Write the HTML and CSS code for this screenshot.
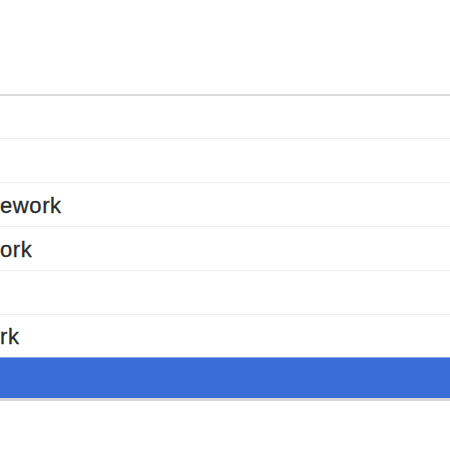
FILE: index.html
```html
<!DOCTYPE html>
<html>
<head>
<meta charset="utf-8">
<link rel="stylesheet" href="styles.css">
</head>
<body>
<div class="top"></div>
<div class="table">
  <div class="row first"></div>
  <div class="row"></div>
  <div class="row"><span class="cell">ework</span></div>
  <div class="row"><span class="cell">ork</span></div>
  <div class="row"></div>
  <div class="row last"><span class="cell">rk</span></div>
  <div class="row selected"></div>
</div>
</body>
</html>
```
FILE: styles.css
```css
html, body {
  margin: 0;
  padding: 0;
  background: #ffffff;
  width: 450px;
  height: 450px;
  overflow: hidden;
  font-family: "Liberation Sans", Arial, sans-serif;
}
.top {
  height: 94px;
}
.table {
  border-top: 2px solid #dadada;
}
.row {
  border-bottom: 1px solid #eeeeee;
  display: flex;
  align-items: center;
  box-sizing: border-box;
  height: 44px;
}
.row.first {
  height: 43px;
}
.row.last {
  border-bottom: none;
  height: 42px;
}
.row.selected {
  height: 44px;
  background: #386cd7;
  border-top: 1px solid #8aa8e6;
  border-bottom: 3px solid #d6d6d6;
}
.cell {
  white-space: nowrap;
  font-size: 22px;
  letter-spacing: 0.6px;
  color: #2a2a2a;
  margin-top: 2px;
  -webkit-text-stroke: 0.3px #2a2a2a;
}
```
